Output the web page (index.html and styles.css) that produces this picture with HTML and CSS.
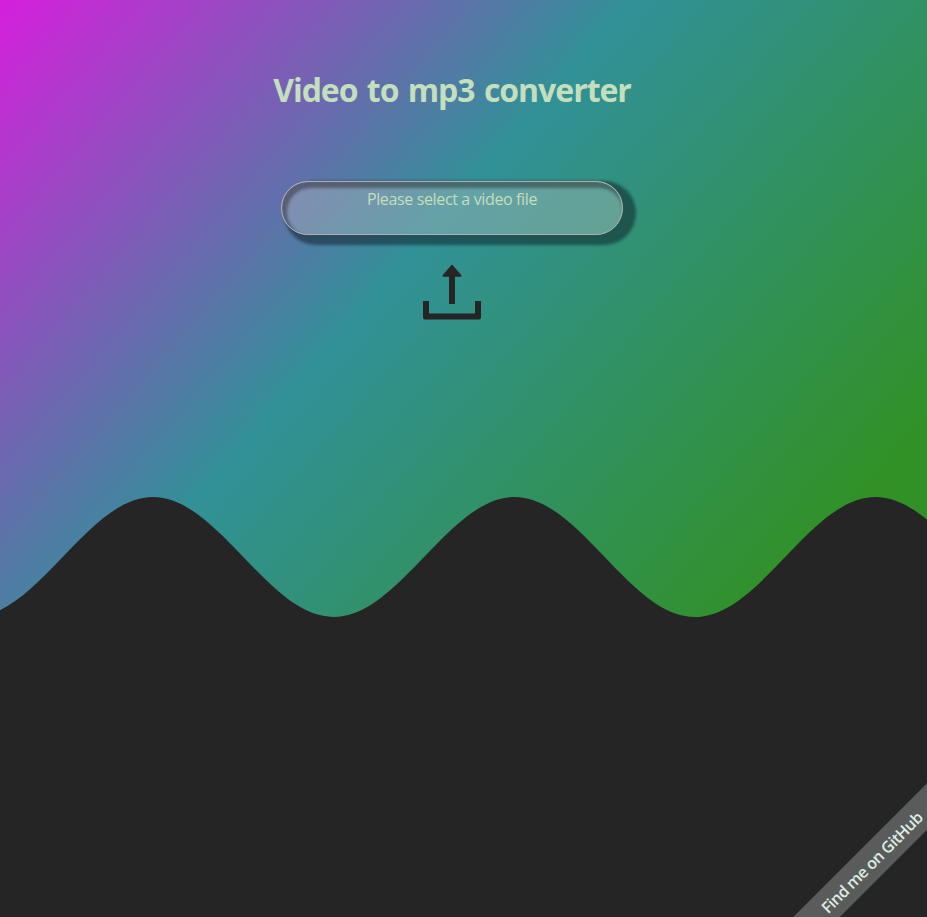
FILE: index.html
```html
<!DOCTYPE html>
<html lang="en">
<head>
<meta charset="utf-8">
<title>Video to mp3 converter</title>
<link rel="stylesheet" href="styles.css">
</head>
<body>
<main class="converter">
  <h1 class="title">Video to mp3 converter</h1>
  <div class="file-box">Please select a video file</div>
  <svg class="upload" viewBox="0 0 60 58" width="60" height="58" fill="#252525">
    <path d="M30 1.500L39.300 12V13.800H33V41H27V13.800H20.700V12Z"/>
    <path d="M1 38H7V50.500H53V38H59V54.500Q59 56.500 57 56.500H3Q1 56.500 1 54.500Z"/>
  </svg>
</main>
<svg class="wave" viewBox="0 0 927 420" width="927" height="420">
  <path fill="#252525" d="M-27.500 120C38 120 87.500 0 153 0C218.500 0 268 120 333.700 120C399.400 120 449 0 514.500 0C580 0 629.500 120 695 120C760.500 120 810 0 875.500 0C941 0 990 120 1056 120V420H-27.500Z"/>
</svg>
<div class="corner"><a class="ribbon">Find me on GitHub</a></div>
</body>
</html>
```
FILE: styles.css
```css
* { box-sizing: border-box; }
body {
  margin: 0;
  height: 917px;
  position: relative;
  display: flex;
  flex-direction: column;
  color: #c4dfbd;
  font-family: "Segoe UI", "Open Sans", "Noto Sans", sans-serif;
  background: linear-gradient(131deg, #d61fdc 0, #319197 479px, #319126 985px);
}
.converter {
  width: 904px;
  height: 497px;
  padding-top: 68px;
  display: flex;
  flex-direction: column;
  align-items: center;
}
.title {
  margin: 0;
  height: 43px;
  line-height: 43px;
  font-size: 32px;
  font-weight: 700;
  letter-spacing: -1.03px;
  word-spacing: 2px;
  white-space: nowrap;
}
.file-box {
  width: 342px;
  height: 54px;
  margin-top: 70px;
  padding-top: 6px;
  border: 1px solid #b5afb1;
  border-radius: 27px;
  text-align: center;
  font-size: 16px;
  line-height: 22px;
  letter-spacing: -0.36px;
  background: rgba(197, 197, 197, 0.34);
  box-shadow: 8px 5px 3px 5px rgba(10, 20, 30, 0.48), inset 3px 4px 3px 2px rgba(37, 37, 37, 0.45);
}
.upload { margin-top: 28px; }
.wave { display: block; flex: none; }
.corner {
  position: absolute;
  right: 0;
  bottom: 0;
  width: 160px;
  height: 160px;
  overflow: hidden;
}
.ribbon {
  position: absolute;
  left: -27px;
  top: 90px;
  width: 260px;
  height: 33px;
  padding-left: 4px;
  line-height: 34px;
  text-align: center;
  font-size: 16px;
  font-weight: 600;
  letter-spacing: -0.55px;
  color: #dfebe3;
  background: #5a5c5b;
  transform: rotate(-45deg);
}
```
